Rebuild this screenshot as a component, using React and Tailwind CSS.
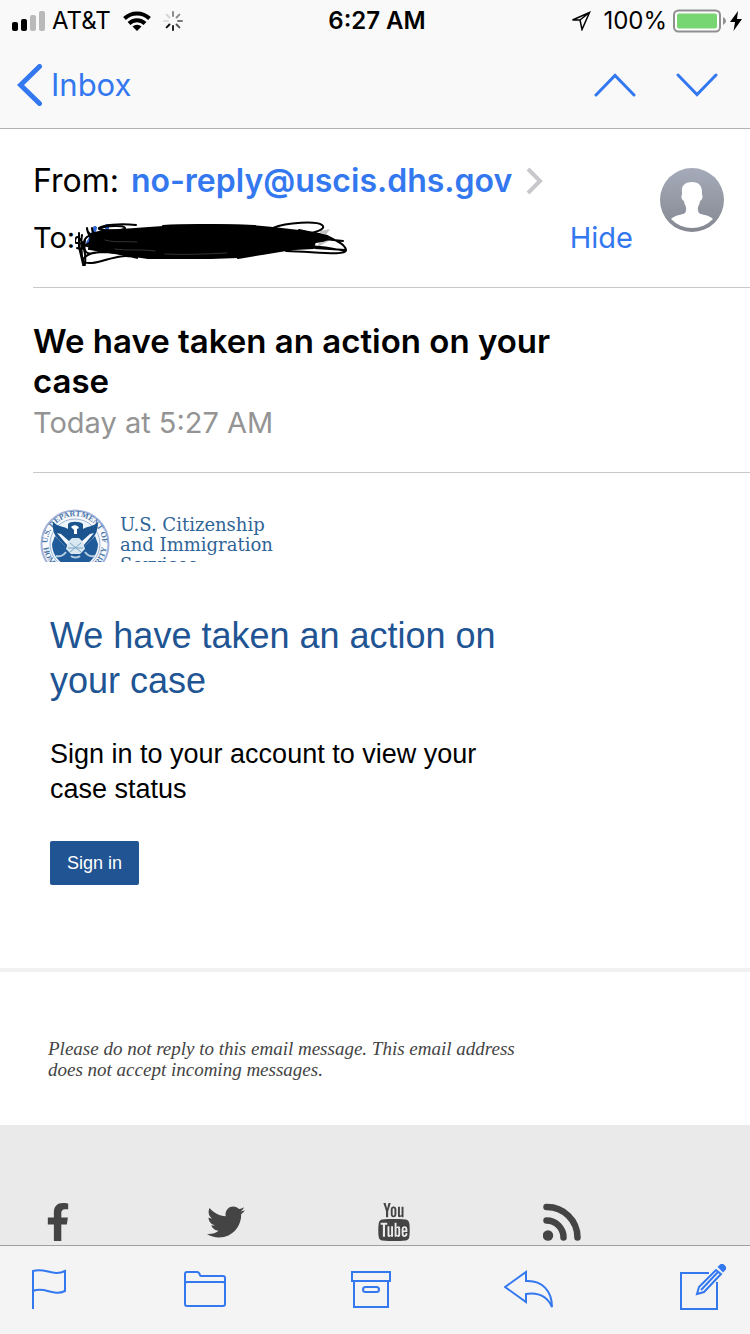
import { FaFacebookF, FaTwitter } from 'react-icons/fa';
import { TfiYoutube } from 'react-icons/tfi';

const spokes = [0, 45, 90, 135, 180, 225, 270, 315];
const spokeColors = ['#8a8a8a', '#8a8a8a', '#777777', '#555555', '#222222', '#111111', '#e0e0e0', '#d5d5d5'];

function StatusBar() {
  return (
    <div className="grid h-[42px] grid-cols-[1fr_auto_1fr] items-center pr-2 pl-3 text-[24px] leading-8 text-black">
      <div className="flex items-center">
        <svg className="h-5 w-[34px]" viewBox="0 0 34 20">
          <rect x="0" y="11" width="6" height="9" rx="2" />
          <rect x="9" y="8" width="6" height="12" rx="2" />
          <rect x="18" y="4" width="6" height="16" rx="2" fill="#bababa" />
          <rect x="27" y="0" width="6" height="20" rx="2" fill="#bababa" />
        </svg>
        <span className="ml-[6px]">AT&amp;T</span>
        <svg className="ml-3 h-5 w-7" viewBox="0 0 28 20" fill="none" stroke="#000" strokeWidth="4">
          <path d="M1.5 7.5a18 18 0 0 1 25 0" />
          <path d="M6 12.5a11.500 11.500 0 0 1 16 0" />
          <path d="M14 20l-4.500-4.500a6.500 6.500 0 0 1 9 0z" fill="#000" stroke="none" />
        </svg>
        <svg className="ml-3 h-5 w-5" viewBox="0 0 20 20" strokeWidth="2" strokeLinecap="round">
          {spokes.map((angle, i) => (
            <path key={angle} d="M10 1v4" stroke={spokeColors[i]} transform={`rotate(${angle} 10 10)`} />
          ))}
        </svg>
      </div>
      <span className="font-semibold">6:27 AM</span>
      <div className="flex items-center justify-end">
        <svg className="h-5 w-5" viewBox="0 0 20 20" fill="none" stroke="#000" strokeWidth="1.500">
          <path d="M18.500 1.500L1.500 9H9L11 18.500zM18.500 1.500L9 9" />
        </svg>
        <span className="ml-3">100%</span>
        <svg className="ml-[6px] h-6 w-[53px]" viewBox="0 0 53 24">
          <rect x="1" y="1.500" width="46" height="21" rx="4.500" fill="#fff" stroke="#8f8f8f" strokeWidth="2" />
          <rect x="4" y="4.500" width="40" height="15" rx="2" fill="#77d672" />
          <path d="M50 8q3 1.500 3 4t-3 4z" fill="#8f8f8f" />
        </svg>
        <svg className="ml-1 h-5 w-3" viewBox="0 0 12 20">
          <path d="M8 0L0 11h5L3.500 20 12 8H7z" />
        </svg>
      </div>
    </div>
  );
}

function NavBar() {
  return (
    <nav className="flex h-[86px] items-center justify-between pr-8 pl-[17px] text-[#3478f0]">
      <a href="#inbox" className="flex items-center gap-2 text-[31px] leading-10">
        <svg className="h-[42px] w-[26px]" viewBox="0 0 26 42" fill="none" stroke="currentColor" strokeWidth="5" strokeLinecap="round">
          <path d="M22.500 2.500L3.500 21l19 18.500" />
        </svg>
        Inbox
      </a>
      <div className="flex gap-10">
        <button aria-label="Previous message">
          <svg className="h-6 w-[42px]" viewBox="0 0 42 24" fill="none" stroke="currentColor" strokeWidth="3" strokeLinecap="round">
            <path d="M2 22L21 2.500 40 22" />
          </svg>
        </button>
        <button aria-label="Next message">
          <svg className="h-6 w-[42px]" viewBox="0 0 42 24" fill="none" stroke="currentColor" strokeWidth="3" strokeLinecap="round">
            <path d="M2 2L21 21.500 40 2" />
          </svg>
        </button>
      </div>
    </nav>
  );
}

function Scribble() {
  return (
    <svg className="h-14 w-[274px]" viewBox="0 -4 274 56" fill="none" stroke="#000" strokeWidth="2" strokeLinecap="round">
      <path d="M20 14l-2 6M32 12v7M16 24l-3 5" stroke="#2f66d8" strokeWidth="4" />
      <path d="M245 17l10-2-4 6 6 4-14 8z" fill="#c4c4c4" stroke="none" />
      <path
        d="M16 20L28 17 46 16 88 13 136 11 176 12 198 14 224 17 244 20 253 25 240 28 238 34 219 35 196 37 163 43 136 44 73 44 46 40 14 35z"
        fill="#000"
      />
      <path d="M88 12c28-2 60-1 92 0" />
      <path d="M61 11c-16-2-34 0-37 3s28 3 26 0-18-2-25 0M12 14c0 6 5 8 12 8M12 15c2 9 6 12 14 12M17 14c0 6 4 8 12 8" />
      <path d="M4 19v14l4 17M7 21c-2 10 0 20 1 29s3-2 2-10-4-12-8-11-1-9 2-5 8 12 12 6" />
      <path d="M2 34c10 4 3-10 12-12M10 26c-2 12 0 16 14 12M6 36c6-8 12-10 24-6M9 44c6-8 30-8 54 0-20-6-32 4-46 5s-9-6-2-9 26-2 40 0" />
      <path d="M198 14c14-6 44-7 49-3s-6 8-26 11M200 17c26 2 50 3 52 6s-6 6-20 4M224 16l28 6c8 4 18 8 19 14s-28 2-60 1M216 34c20-4 40 0 54 3M240 24l28 3M240 34l30 2M163 44l60-10" />
      <path d="M30 26c10 3 20 1 32 2M40 35c14 2 24 0 40 2M90 40c20 1 40 0 62-1" stroke="#333" strokeWidth="1" />
    </svg>
  );
}

function Avatar() {
  return (
    <svg className="size-16 shrink-0" viewBox="0 0 64 64" role="img" aria-label="Contact">
      <defs>
        <linearGradient id="avatar-fill" x1="0" y1="0" x2="0" y2="1">
          <stop offset="0" stopColor="#a5abb9" />
          <stop offset="1" stopColor="#858891" />
        </linearGradient>
      </defs>
      <circle cx="32" cy="32" r="32" fill="url(#avatar-fill)" />
      <path
        d="M32 14c-7 0-11 4-10 10v3c-1 0-1 5 2 6 0 4 3 5 2 9 0 4-3 4-7 5-4 1-6 2-8 4a29 29 0 0 0 42 0c-2-2-4-3-8-4-4-1-7-1-7-5-1-4 2-5 2-9 3-1 3-6 2-6v-3c0-6-3-10-10-10z"
        fill="#fff"
      />
    </svg>
  );
}

function MessageHeader() {
  return (
    <section className="ml-[33px] flex border-b border-[#c8c8cb] pt-[29px] pr-[26px] pb-[26px] text-black">
      <div className="min-w-0 flex-1">
        <div className="flex h-[46px] items-center text-[32px]">
          <span className="mr-3">From:</span>
          <a href="mailto:no-reply@uscis.dhs.gov" className="font-semibold text-[#3478f0]">
            no-reply@uscis.dhs.gov
          </a>
          <svg className="ml-[14px] h-7 w-[18px]" viewBox="0 0 18 28" fill="none" stroke="#c7c7cc" strokeWidth="4">
            <path d="M2 2l12 12L2 26" />
          </svg>
        </div>
        <div className="mt-[11px] flex h-[46px] items-center text-[29px]">
          <span>To:</span>
          <Scribble />
          <button className="ml-auto text-[#3478f0]">Hide</button>
        </div>
      </div>
      <div className="mt-[10px] ml-[27px]">
        <Avatar />
      </div>
    </section>
  );
}

function Seal() {
  return (
    <svg className="size-[70px] shrink-0" viewBox="0 0 70 70" role="img" aria-label="Department of Homeland Security seal">
      <defs>
        <path id="seal-top" d="M9.500 45A27.500 27.500 0 1 1 60.500 45" />
        <path id="seal-bottom" d="M3.500 40A32 32 0 0 0 66.500 40" />
      </defs>
      <circle cx="35" cy="35" r="33.500" fill="#f8fafd" stroke="#a3b3da" strokeWidth="2" />
      <circle cx="35" cy="35" r="25" fill="#eef4fa" stroke="#9db6d6" strokeWidth="1" />
      <g fill="#4a76a8" className="font-['Liberation_Serif',serif] text-[8px] font-bold">
        <text>
          <textPath href="#seal-top" startOffset="50%" textAnchor="middle">U.S. DEPARTMENT OF</textPath>
        </text>
        <text>
          <textPath href="#seal-bottom" startOffset="50%" textAnchor="middle">HOMELAND SECURITY</textPath>
        </text>
      </g>
      <path d="M12 35a23 23 0 0 0 46 0l-3-8-10 10H25L15 27z" fill="#1f5c99" />
      <path d="M13 13c5 5 10 4 15 7v-5c2-3 12-3 15 0v5c5-3 10-2 15-7 0 9-3 14-7 18l-9 9H28l-9-9c-4-4-7-9-6-18z" fill="#1c5490" />
      <path d="M31 18c3-3 7-2 8 1l-2 1v5h-3v-4z" fill="#fff" />
      <path d="M17 24l4 1 9 8-2 4zM54 24l-4 1-9 8 2 4z" fill="#f4f8fc" />
      <path d="M28 33l4-4h7l4 4 2 7-5 5h-9l-5-5z" fill="#d9e7f1" />
      <path d="M30 34l11 9M41 34l-11 9M28 39h15" stroke="#7ba4c5" strokeWidth="1" />
      <path d="M26 43c-3 4-6 5-10 4M45 43c3 4 6 5 10 4M31 47c2 2 7 2 9 0" fill="none" stroke="#b7cfe3" strokeWidth="2" />
    </svg>
  );
}

function EmailBody() {
  return (
    <main className="text-black">
      <div className="mt-9 ml-10 flex h-[53px] overflow-hidden">
        <Seal />
        <p className="ml-[10px] pt-[6px] font-['DejaVu_Serif',serif] text-[18px] leading-5 text-[#2f6496]">
          U.S. Citizenship
          <br />
          and Immigration
          <br />
          Services
        </p>
      </div>
      <div className="mt-[51px] ml-[50px] max-w-[480px] font-['Liberation_Sans',Arial,sans-serif]">
        <h1 className="text-[36px] leading-[45px] text-[#205493]">We have taken an action on your case</h1>
        <p className="mt-[34px] max-w-[440px] text-[27px] leading-[35px]">Sign in to your account to view your case status</p>
        <button className="mt-[34px] h-11 rounded-xs bg-[#205493] px-[17px] text-[18px] text-white">Sign in</button>
      </div>
      <hr className="mt-[83px] border-t-4 border-[#f1f1f1]" />
      <p className="mt-[66px] ml-12 max-w-[480px] font-['Liberation_Serif',serif] text-[19px] leading-[21px] text-[#444444] italic">
        Please do not reply to this email message. This email address does not accept incoming messages.
      </p>
    </main>
  );
}

function RssIcon() {
  return (
    <svg className="size-[38px] shrink-0" viewBox="0 0 38 38" fill="none" stroke="currentColor" strokeWidth="6.500" strokeLinecap="round">
      <circle cx="5" cy="32.500" r="5.200" fill="currentColor" stroke="none" />
      <path d="M3.500 17.500A17 17 0 0 1 20.500 34.500M3.500 4A30.500 30.500 0 0 1 34.500 34.500" />
    </svg>
  );
}

function SocialLinks() {
  const link = 'flex w-9 justify-center';
  return (
    <footer className="mt-[45px] flex flex-1 gap-[132px] bg-[#eaeaea] pt-[78px] pl-10 text-[#444444]">
      <a href="#facebook" aria-label="Facebook" className={link}><FaFacebookF className="size-[38px] shrink-0" /></a>
      <a href="#twitter" aria-label="Twitter" className={link}><FaTwitter className="size-[38px] shrink-0" /></a>
      <a href="#youtube" aria-label="YouTube" className={link}><TfiYoutube className="size-[38px] shrink-0" /></a>
      <a href="#rss" aria-label="RSS" className={link}><RssIcon /></a>
    </footer>
  );
}

function Toolbar() {
  const icon = { fill: 'none', stroke: 'currentColor', strokeWidth: 2 };
  return (
    <div className="flex h-[89px] items-start justify-between border-t border-[#a0a0a2] bg-[#f4f4f4] pt-[18px] pr-6 pl-[31px] text-[#3478f0]">
      <button aria-label="Flag">
        <svg className="h-12 w-10" viewBox="0 0 40 48" {...icon}>
          <path d="M2 45V7c12-4 20 6 32 0v20c-12 6-20-5-32 0" />
        </svg>
      </button>
      <button aria-label="Move to folder">
        <svg className="h-12 w-12" viewBox="0 0 48 48" {...icon}>
          <path d="M2 40V10q0-2 2-2h10q2 0 3 3 0 1 2 1h21q2 0 2 2v26q0 2-2 2H4q-2 0-2-2zM2 20q0-2 2-2h36q2 0 2 2" />
        </svg>
      </button>
      <button aria-label="Archive">
        <svg className="h-12 w-12" viewBox="0 0 48 48" {...icon}>
          <path d="M8 8h38v9H8zM10 17v26h34V17" />
          <rect x="19" y="23" width="16" height="5" rx="2.500" />
        </svg>
      </button>
      <button aria-label="Reply">
        <svg className="h-12 w-16" viewBox="0 0 64 48" {...icon}>
          <path d="M1 23L22 8v9c16-1 26 10 26 26-4-9-12-15-26-13v8z" />
        </svg>
      </button>
      <button aria-label="Compose">
        <svg className="h-12 w-[46px]" viewBox="0 0 46 48" {...icon}>
          <path d="M29 9H1v36h36V18" />
          <path d="M19 23l-2 7 7-2L41 10l-5-4zM21 26L38 8" />
          <path d="M39 3l2-2q1-1 3 1t1 3l-2 2z" fill="currentColor" />
        </svg>
      </button>
    </div>
  );
}

export default function App() {
  return (
    <div className="flex min-h-screen flex-col bg-white font-['Inter',sans-serif]">
      <header className="border-b border-[#b2b2b2] bg-[#f9f9f9]">
        <StatusBar />
        <NavBar />
      </header>
      <MessageHeader />
      <section className="ml-[33px] border-b border-[#c8c8cb] pt-[33px] pb-[29px]">
        <h2 className="max-w-[560px] text-[33px] leading-10 font-semibold text-black">We have taken an action on your case</h2>
        <p className="mt-[2px] text-[29px] leading-10 text-[#949494]">Today at 5:27 AM</p>
      </section>
      <EmailBody />
      <SocialLinks />
      <Toolbar />
    </div>
  );
}
